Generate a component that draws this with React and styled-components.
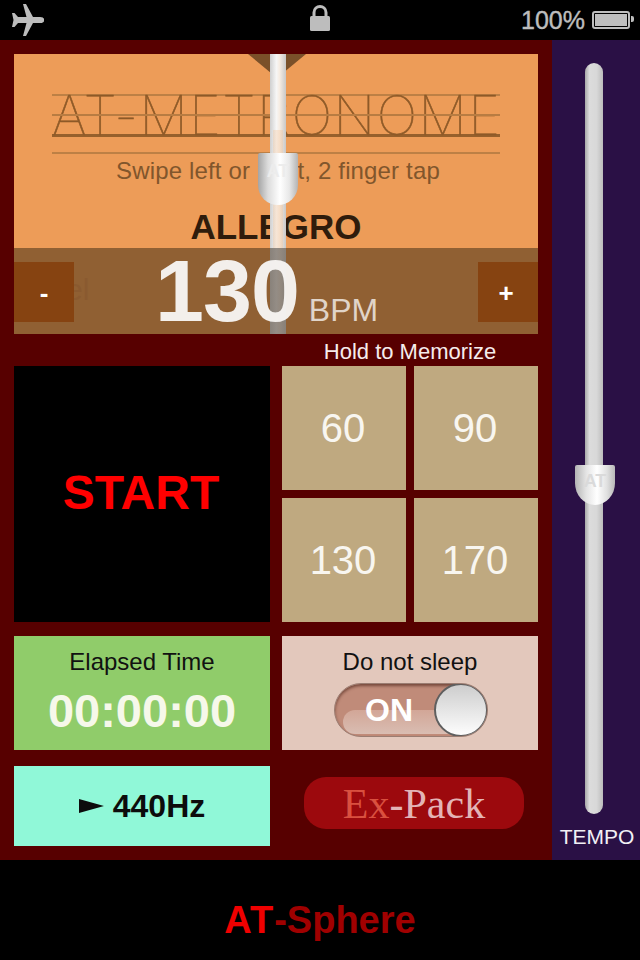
import React from 'react';
import styled, { createGlobalStyle } from 'styled-components';

const GlobalStyle = createGlobalStyle`
	html, body {
		margin: 0;
		padding: 0;
		background: #000;
		font-family: "Liberation Sans", Arial, sans-serif;
	}
`;

const Screen = styled.div`
	width: 640px;
	height: 960px;
	display: flex;
	flex-direction: column;
	overflow: hidden;
	background: #000;
`;

const StatusBar = styled.div`
	height: 40px;
	display: grid;
	grid-template-columns: 1fr auto 1fr;
	align-items: center;
	padding: 0 8px;
	color: #bdbdbd;
	background: #000;
`;

const StatusRight = styled.div`
	display: flex;
	justify-content: flex-end;
	align-items: center;
	gap: 7px;
	margin-right: 2px;
	font-size: 25px;
	font-weight: 400;
	-webkit-text-stroke: 0.4px #bdbdbd;
`;

const Battery = styled.div`
	width: 32px;
	height: 12px;
	padding: 1px;
	border: 2px solid #bdbdbd;
	border-radius: 3px;
	position: relative;
	&::before {
		content: '';
		display: block;
		height: 100%;
		background: #bdbdbd;
	}
	&::after {
		content: '';
		position: absolute;
		right: -6px;
		top: 3px;
		width: 3px;
		height: 6px;
		background: #bdbdbd;
		border-radius: 0 2px 2px 0;
	}
`;

const PlaneSvg = styled.svg`
	margin-left: 2px;
`;

const LockSvg = styled.svg`
	margin-bottom: 3px;
`;

const Main = styled.div`
	height: 820px;
	display: flex;
`;

const LeftPane = styled.div`
	width: 524px;
	padding: 14px;
	background: #570000;
	display: flex;
	flex-direction: column;
`;

const TempoPane = styled.div`
	width: 88px;
	padding-top: 23px;
	background: #2a1045;
	display: flex;
	flex-direction: column;
	align-items: center;
	box-sizing: border-box;
`;

const Track = styled.div`
	width: 18px;
	height: 751px;
	margin-left: -4px;
	border-radius: 9px;
	background: linear-gradient(90deg, #a8a8a8 0%, #dcdcdc 25%, #d8d8d8 65%, #bcbcbc 100%);
	position: relative;
`;

const Thumb = styled.div`
	position: absolute;
	left: -10px;
	top: 402px;
	width: 40px;
	height: 40px;
	border-radius: 2px 2px 20px 20px / 2px 2px 22px 22px;
	background: linear-gradient(90deg, #b4b4b4 0%, #e4e4e4 28%, #ffffff 55%, #e0e0e0 80%, #b8b8b8 100%);
	color: #dadada;
	font-size: 18px;
	font-weight: 700;
	text-align: center;
	padding-top: 6px;
	box-sizing: border-box;
`;

const TempoLabel = styled.div`
	margin: 11px 0 0 2px;
	font-size: 21px;
	color: #f2f0f5;
`;

const TopPanel = styled.div`
	height: 280px;
	position: relative;
	background: #ed9c58;
	display: flex;
	flex-direction: column;
	align-items: center;
	overflow: hidden;
`;

const Pointer = styled.svg`
	position: absolute;
	left: 234px;
	top: 0;
	width: 58px;
	height: 24px;
`;

const TitleBlock = styled.div`
	margin-top: 40px;
	width: 448px;
	height: 60px;
	position: relative;
	border-top: 2px solid #bd8045;
	border-bottom: 2px solid #bd8045;
	box-sizing: border-box;
`;

const TitleText = styled.div`
	text-align: center;
	font-family: Inter, "Liberation Sans", sans-serif;
	font-weight: 100;
	font-size: 54px;
	line-height: 40px;
	letter-spacing: 1.5px;
	white-space: nowrap;
	color: #8e5a28;
	-webkit-text-stroke: 0.6px #8e5a28;
	border-bottom: 3px solid #96602c;
	height: 38px;
`;

const MidLine = styled.div`
	position: absolute;
	left: 0;
	right: 0;
	top: 18px;
	height: 2px;
	background: #b87c42;
`;

const Hint = styled.div`
	margin-top: 3px;
	padding-left: 4px;
	font-size: 24px;
	line-height: 28px;
	letter-spacing: 0.15px;
	color: #81562c;
`;

const Tempo = styled.div`
	margin-top: 22px;
	font-size: 35px;
	font-weight: 700;
	line-height: 40px;
	color: #2f1c0c;
`;

const Band = styled.div`
	position: absolute;
	left: 0;
	right: 0;
	bottom: 0;
	height: 86px;
	background: #906033;
	display: flex;
	align-items: flex-start;
	justify-content: space-between;
	padding-top: 14px;
	box-sizing: border-box;
`;

const StepButton = styled.div`
	width: 60px;
	height: 60px;
	background: #864311;
	color: #fff;
	font-size: 26px;
	font-weight: 700;
	display: flex;
	align-items: center;
	justify-content: center;
	padding-top: 2px;
	box-sizing: border-box;
	position: relative;
	z-index: 1;
	&:last-child {
		padding-right: 4px;
	}
`;

const GhostLabel = styled.div`
	position: absolute;
	left: 2px;
	top: 24px;
	font-size: 30px;
	line-height: 36px;
	color: #8a5a30;
`;

const BpmReadout = styled.div`
	position: absolute;
	left: 141px;
	top: 3px;
	display: flex;
	align-items: baseline;
	gap: 10px;
	z-index: 3;
`;

const BpmValue = styled.span`
	font-size: 88px;
	font-weight: 700;
	line-height: 80px;
	letter-spacing: -1px;
	color: rgba(247, 245, 242, 0.96);
`;

const BpmUnit = styled.span`
	font-size: 32px;
	color: #e0d4c8;
`;

const Rod = styled.div`
	position: absolute;
	left: 256px;
	top: 0;
	width: 16px;
	height: 280px;
	z-index: 2;
	background:
		linear-gradient(rgba(245, 190, 140, 0.3), rgba(245, 190, 140, 0.3)) center 76px / 10px 118px no-repeat,
		linear-gradient(180deg,
			rgba(255, 255, 255, 0) 0,
			rgba(255, 255, 255, 0) 194px,
			rgba(110, 100, 90, 0.72) 194px,
			rgba(110, 100, 90, 0.72) 280px),
		linear-gradient(90deg, #cfcfcf 0%, #f6f6f6 40%, #f6ece2 60%, #c8c8c8 100%);
`;

const Weight = styled.div`
	position: absolute;
	left: 244px;
	top: 99px;
	width: 40px;
	height: 52px;
	z-index: 3;
	border-radius: 2px 2px 20px 20px / 2px 2px 20px 20px;
	background: linear-gradient(90deg, #a4a4a4 0%, #dcdcdc 25%, #ffffff 55%, #e8e8e8 78%, #b4b4b4 100%);
	color: #ececec;
	font-size: 18px;
	font-weight: 700;
	text-align: center;
	padding-top: 8px;
	box-sizing: border-box;
`;

const MemorizeLabel = styled.div`
	height: 32px;
	line-height: 36px;
	padding-left: 268px;
	text-align: center;
	font-size: 22px;
	color: #f5ecec;
	white-space: nowrap;
`;

const Controls = styled.div`
	display: grid;
	grid-template-columns: 256px 256px;
	column-gap: 12px;
`;

const StartButton = styled.div`
	height: 256px;
	background: #000;
	color: #f00;
	font-size: 48px;
	font-weight: 700;
	display: flex;
	align-items: center;
	justify-content: center;
	padding: 0 2px 4px 0;
	box-sizing: border-box;
`;

const Presets = styled.div`
	display: grid;
	grid-template-columns: 124px 124px;
	grid-template-rows: 124px 124px;
	gap: 8px;
`;

const Preset = styled.div`
	background: #bfa980;
	color: #f8f6f0;
	font-size: 40px;
	display: flex;
	align-items: center;
	justify-content: center;
	padding-right: 2px;
	box-sizing: border-box;
`;

const InfoRow = styled.div`
	margin-top: 14px;
	display: grid;
	grid-template-columns: 256px 256px;
	column-gap: 12px;
`;

const InfoCard = styled.div`
	height: 114px;
	background: ${props => props.$bg};
	display: flex;
	flex-direction: column;
	align-items: center;
	padding-top: 12px;
	box-sizing: border-box;
`;

const CardLabel = styled.div`
	font-size: 24px;
	line-height: 27px;
	color: #111;
`;

const Elapsed = styled.div`
	margin-top: 8px;
	font-size: 47px;
	font-weight: 700;
	line-height: 56px;
	color: #f6f8ea;
`;

const Switch = styled.div`
	margin: 8px 0 0 2px;
	width: 154px;
	height: 54px;
	border-radius: 27px;
	box-sizing: border-box;
	background: #c08b79;
	border: 1px solid #9a7d72;
	box-shadow: inset 0 2px 3px rgba(70, 30, 20, 0.6);
	position: relative;
	overflow: hidden;
	&::before {
		content: '';
		position: absolute;
		left: 8px;
		right: 30px;
		top: 26px;
		bottom: 2px;
		border-radius: 14px 0 0 14px;
		background: linear-gradient(180deg, #d2a697, #d9bdb2);
	}
`;

const SwitchText = styled.div`
	position: absolute;
	left: 30px;
	top: 8px;
	font-size: 32px;
	line-height: 36px;
	font-weight: 700;
	color: #fff;
`;

const Knob = styled.div`
	position: absolute;
	right: -1px;
	top: -1px;
	width: 54px;
	height: 54px;
	box-sizing: border-box;
	border-radius: 50%;
	border: 2px solid #5f5f5f;
	background: linear-gradient(180deg, #cdcdcd, #fdfdfd);
`;

const BottomRow = styled.div`
	margin-top: 16px;
	display: grid;
	grid-template-columns: 256px 256px;
	column-gap: 12px;
	align-items: center;
`;

const PitchButton = styled.div`
	height: 80px;
	background: #90f8d8;
	color: #0c0c0c;
	font-size: 32px;
	font-weight: 700;
	display: flex;
	align-items: center;
	justify-content: center;
	gap: 9px;
`;

const ExPack = styled.div`
	justify-self: end;
	margin: 0 14px 6px 0;
	width: 220px;
	height: 52px;
	border-radius: 22px;
	background: #9c090d;
	font-family: "Liberation Serif", "Times New Roman", serif;
	font-size: 42px;
	line-height: 54px;
	text-align: center;
	color: #e3b4b6;
`;

const Accent = styled.span`
	color: ${props => props.$color};
	letter-spacing: ${props => props.$spacing || 'normal'};
`;

const AdBar = styled.div`
	height: 100px;
	background: #000;
	display: flex;
	align-items: center;
	justify-content: center;
	font-size: 38px;
	font-weight: 700;
	color: #a00000;
	padding-top: 20px;
	box-sizing: border-box;
`;

const AirplaneIcon = () => (
	<PlaneSvg width="34" height="32" viewBox="0 0 34 32" fill="#bdbdbd">
		<path d="M13 0 L16 0 L23 13 L30 13 C34 13 34.5 15.5 34 16 C34.5 16.5 34 19 30 19 L23 19 L16 32 L13 32 L16.5 19 L8 19 L4.5 23 L2 23 L3.5 16 L2 9 L4.5 9 L8 13 L16.5 13 Z" />
	</PlaneSvg>
);

const LockIcon = () => (
	<LockSvg width="20" height="27" viewBox="0 0 20 27">
		<path d="M4 12 V7.5 C4 -0.5 16 -0.5 16 7.5 V12" fill="none" stroke="#bdbdbd" strokeWidth="3" />
		<rect x="0" y="11" width="20" height="15" rx="1.5" fill="#bdbdbd" />
	</LockSvg>
);

const ArrowIcon = () => (
	<svg width="25" height="14" viewBox="0 0 25 14">
		<polygon points="0,0 25,7 0,14" fill="#0c0c0c" />
	</svg>
);

const presets = [60, 90, 130, 170];

class App extends React.Component {
	render() {
		return (
			<React.Fragment>
				<GlobalStyle />
				<Screen>
					<StatusBar>
						<AirplaneIcon />
						<LockIcon />
						<StatusRight>
							100%
							<Battery />
						</StatusRight>
					</StatusBar>
					<Main>
						<LeftPane>
							<TopPanel>
								<Pointer viewBox="0 0 58 24">
									<polygon points="0,0 58,0 29,24" fill="#7a5029" />
								</Pointer>
								<TitleBlock>
									<TitleText>AT-METRONOME</TitleText>
									<MidLine />
								</TitleBlock>
								<Hint>Swipe left or right, 2 finger tap</Hint>
								<Tempo>ALLEGRO</Tempo>
								<Band>
									<StepButton>-</StepButton>
									<GhostLabel>Label</GhostLabel>
									<BpmReadout>
										<BpmValue>130</BpmValue>
										<BpmUnit>BPM</BpmUnit>
									</BpmReadout>
									<StepButton>+</StepButton>
								</Band>
								<Rod />
								<Weight>AT</Weight>
							</TopPanel>
							<MemorizeLabel>Hold to Memorize</MemorizeLabel>
							<Controls>
								<StartButton>START</StartButton>
								<Presets>
									{presets.map(preset => (
										<Preset key={preset}>{preset}</Preset>
									))}
								</Presets>
							</Controls>
							<InfoRow>
								<InfoCard $bg="#90cc6a">
									<CardLabel>Elapsed Time</CardLabel>
									<Elapsed>00:00:00</Elapsed>
								</InfoCard>
								<InfoCard $bg="#e3c8bc">
									<CardLabel>Do not sleep</CardLabel>
									<Switch>
										<SwitchText>ON</SwitchText>
										<Knob />
									</Switch>
								</InfoCard>
							</InfoRow>
							<BottomRow>
								<PitchButton>
									<ArrowIcon />
									<span>440Hz</span>
								</PitchButton>
								<ExPack>
									<Accent $color="#d9503f">Ex</Accent>-Pack
								</ExPack>
							</BottomRow>
						</LeftPane>
						<TempoPane>
							<Track>
								<Thumb>AT</Thumb>
							</Track>
							<TempoLabel>TEMPO</TempoLabel>
						</TempoPane>
					</Main>
					<AdBar>
						<Accent $color="#f00000" $spacing="1px">AT</Accent>-Sphere
					</AdBar>
				</Screen>
			</React.Fragment>
		);
	}
}

export default App;
